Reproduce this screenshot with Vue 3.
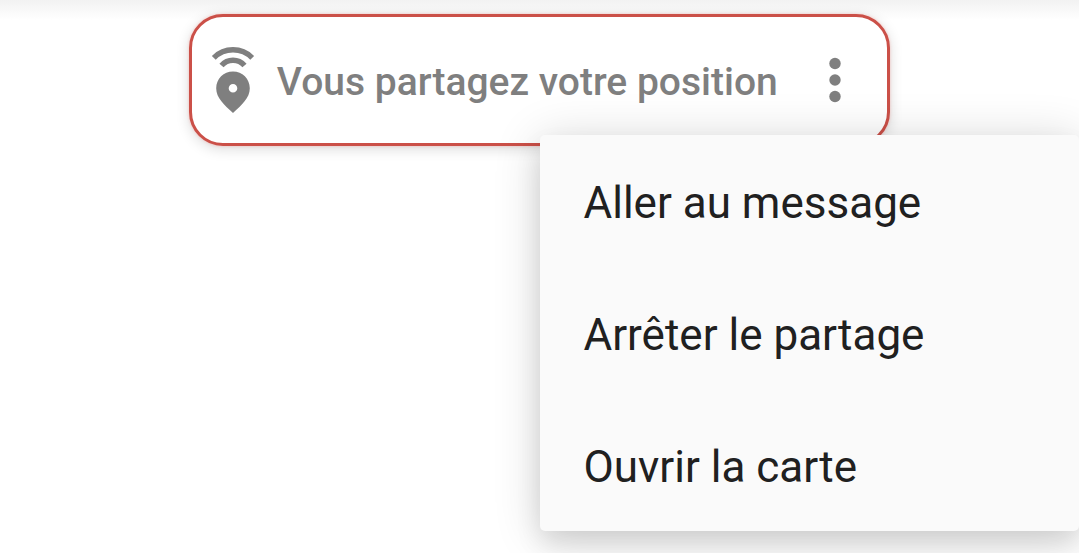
<template>
  <main class="lb-page">
    <div class="lb-topshade"></div>
    <section class="lb-banner">
      <svg class="lb-pin" viewBox="0 0 44 68" aria-hidden="true">
        <path d="M2.8 11.8 A27 27 0 0 1 41.2 11.8" fill="none" stroke="#7f7f7f" stroke-width="5.4" />
        <path d="M10.5 19.6 A15 15 0 0 1 33.5 19.6" fill="none" stroke="#7f7f7f" stroke-width="5.4" />
        <path
          fill="#7f7f7f"
          fill-rule="evenodd"
          d="M22 25.6 C12.6 25.6 5.2 33 5.2 42.2 C5.2 52 13.5 59 22 67 C30.5 59 38.8 52 38.8 42.2 C38.8 33 31.4 25.6 22 25.6 Z M22 37.9 A4.3 4.3 0 1 1 22 46.5 A4.3 4.3 0 1 1 22 37.9 Z"
        />
      </svg>
      <h1 class="lb-title">Vous partagez votre position</h1>
      <button
        type="button"
        class="lb-more"
        aria-label="Plus d'options"
        aria-haspopup="menu"
        :aria-expanded="menuOpen"
        @click="menuOpen = !menuOpen"
      >
        <svg viewBox="0 0 12 46" aria-hidden="true">
          <circle cx="6" cy="6.5" r="5.7" />
          <circle cx="6" cy="23" r="5.7" />
          <circle cx="6" cy="39.5" r="5.7" />
        </svg>
      </button>
    </section>

    <div v-if="menuOpen" class="lb-menu" role="menu">
      <button
        v-for="item in items"
        :key="item"
        type="button"
        class="lb-item"
        role="menuitem"
        @click="menuOpen = false"
      >{{ item }}</button>
    </div>
  </main>
</template>

<script setup>
  import { ref } from 'vue'

  const menuOpen = ref(true)
  const items = ['Aller au message', 'Arrêter le partage', 'Ouvrir la carte']
</script>

<style>
  body { margin: 0; background: #fff; }
</style>

<style scoped>
  .lb-page {
    position: relative; box-sizing: border-box; min-height: 100vh; padding-top: 14px;
    overflow: hidden; background: #fff;
    font-family: Roboto, "Liberation Sans", sans-serif;
  }
  .lb-topshade {
    position: absolute; top: 0; left: 0; right: 0; height: 20px;
    background: linear-gradient(#f2f2f2, #fff);
  }
  .lb-banner {
    position: relative; box-sizing: border-box;
    width: 65%; min-width: 701px; height: 132px; margin: 0 auto; padding: 0 35px 0 19px;
    display: flex; align-items: center;
    background: #fff; border: 3px solid #cb5048; border-radius: 34px;
    box-shadow: 0 0 3px rgba(255,90,80,0.3), 0 3px 14px rgba(0,0,0,0.14);
  }
  .lb-pin { width: 44px; height: 68px; flex: none; }
  .lb-title {
    flex: 1; margin: 0 0 0 22px; padding-top: 4px;
    font-size: 39px; line-height: 48px; font-weight: 500; color: #7f7f7f; white-space: nowrap;
  }
  .lb-more {
    width: 34px; height: 68px; padding: 0; border: 0; background: none; cursor: pointer;
    display: flex; align-items: center; justify-content: center;
  }
  .lb-more svg { width: 12px; height: 46px; fill: #7f7f7f; }
  .lb-menu {
    position: absolute; top: 135px; right: 0; width: 50%;
    display: flex; flex-direction: column;
    background: #fafafa; border-radius: 5px;
    box-shadow: 0 14px 26px rgba(0,0,0,0.1), 0 4px 48px rgba(0,0,0,0.16);
  }
  .lb-item {
    height: 132px; padding: 4px 44px 0; border: 0; background: none; cursor: pointer;
    font-family: inherit; font-size: 44px; line-height: 52px; text-align: left; color: #202020;
  }
  .lb-item:hover { background: #f0f0f0; }
</style>
